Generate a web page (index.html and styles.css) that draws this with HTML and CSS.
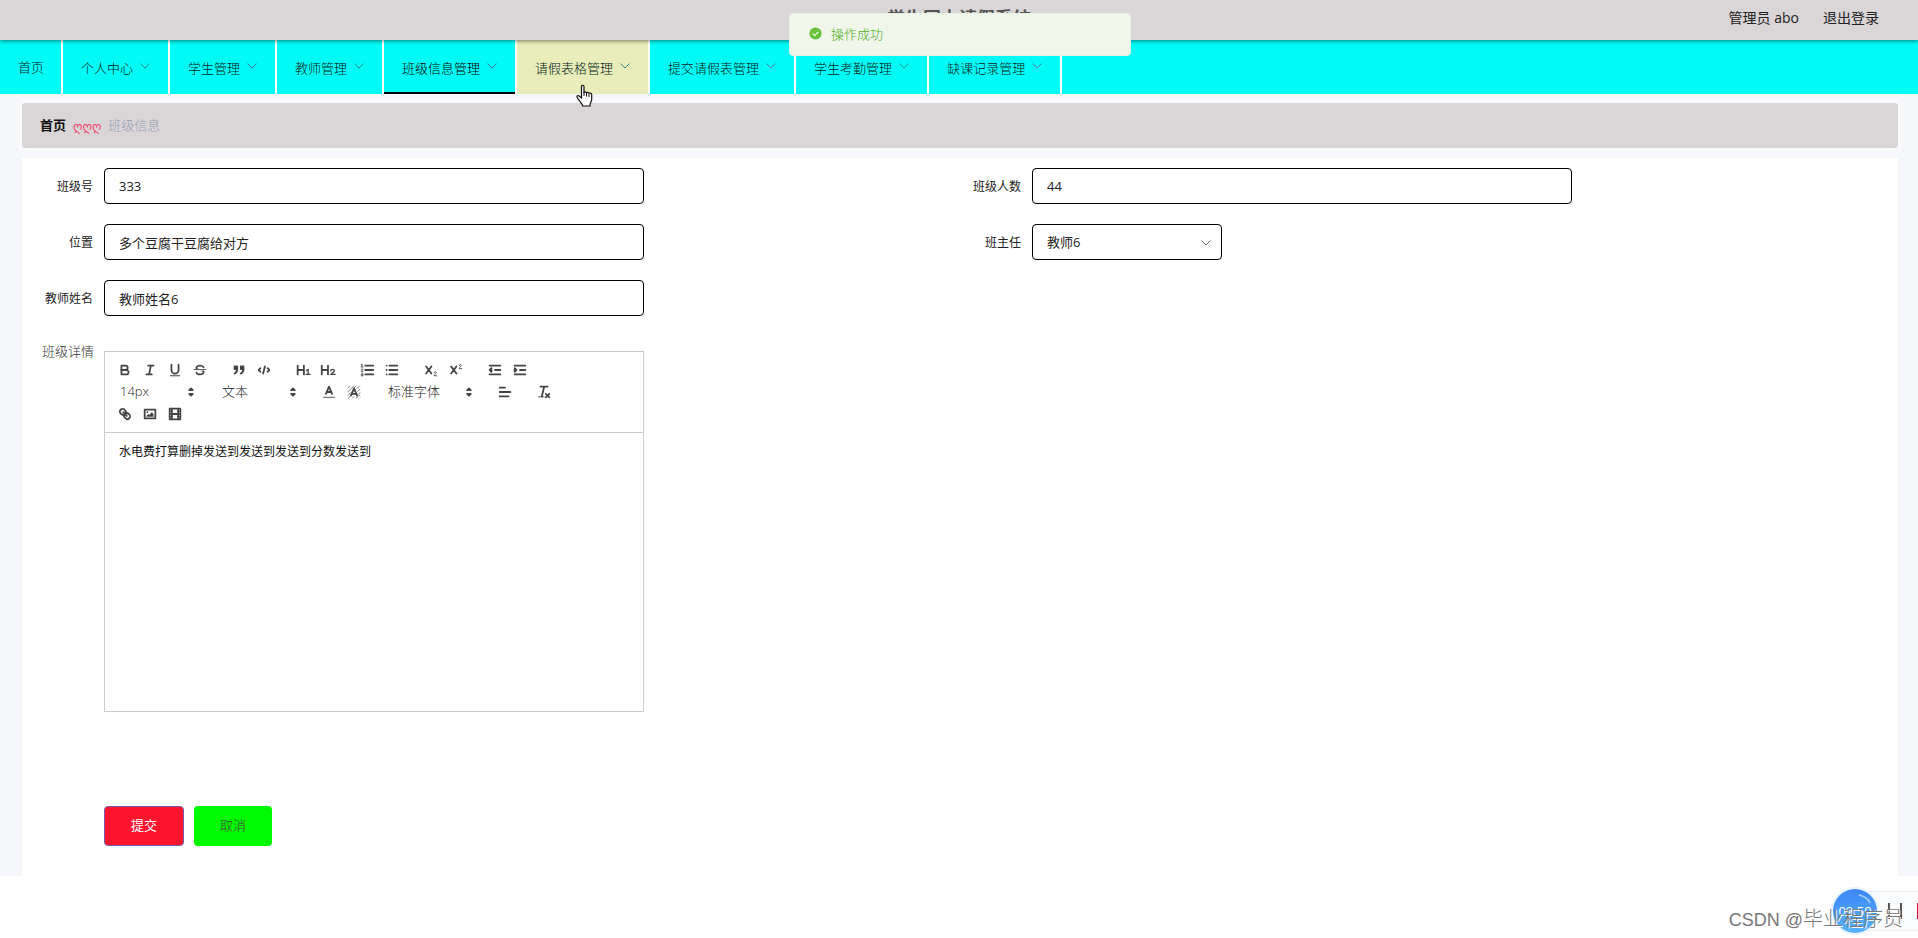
FILE: index.html
```html
<!DOCTYPE html>
<html lang="zh-CN">
<head>
<meta charset="utf-8">
<title>学生网上请假系统</title>
<link rel="stylesheet" href="styles.css">
</head>
<body>
<svg class="sprite" aria-hidden="true">
  <symbol id="chevron" viewBox="0 0 12 12"><path d="M1.5 3.5 6 8l4.500-4.500" fill="none" stroke="currentColor"/></symbol>
  <symbol id="updown" viewBox="0 0 18 18"><polygon points="7 11 9 13 11 11 7 11"/><polygon points="7 7 9 5 11 7 7 7"/></symbol>
</svg>

<header class="header">
  <h1 class="header-title">学生网上请假系统</h1>
  <div class="header-user">
    <span>管理员 abo</span>
    <a href="#logout">退出登录</a>
  </div>
</header>

<nav class="nav">
  <a class="nav-item nav-home" href="#home">首页</a>
  <a class="nav-item" href="#center">个人中心<svg class="nav-arrow"><use href="#chevron"/></svg></a>
  <a class="nav-item" href="#students">学生管理<svg class="nav-arrow"><use href="#chevron"/></svg></a>
  <a class="nav-item" href="#teachers">教师管理<svg class="nav-arrow"><use href="#chevron"/></svg></a>
  <a class="nav-item is-active" href="#classes">班级信息管理<svg class="nav-arrow"><use href="#chevron"/></svg></a>
  <a class="nav-item is-hover" href="#forms">请假表格管理<svg class="nav-arrow"><use href="#chevron"/></svg></a>
  <a class="nav-item" href="#submitted">提交请假表管理<svg class="nav-arrow"><use href="#chevron"/></svg></a>
  <a class="nav-item" href="#attendance">学生考勤管理<svg class="nav-arrow"><use href="#chevron"/></svg></a>
  <a class="nav-item" href="#absence">缺课记录管理<svg class="nav-arrow"><use href="#chevron"/></svg></a>
</nav>

<main class="main">
  <div class="breadcrumb">
    <a class="crumb-home" href="#home">首页</a>
    <span class="crumb-sep">ღღღ</span>
    <span class="crumb-current">班级信息</span>
  </div>

  <form class="panel">
    <div class="fields">
      <div class="field">
        <label class="label" for="class-no">班级号</label>
        <input class="input" id="class-no" type="text" value="333">
      </div>
      <div class="field">
        <label class="label" for="class-size">班级人数</label>
        <input class="input" id="class-size" type="text" value="44">
      </div>
      <div class="field">
        <label class="label" for="place">位置</label>
        <input class="input" id="place" type="text" value="多个豆腐干豆腐给对方">
      </div>
      <div class="field">
        <label class="label" for="head-teacher">班主任</label>
        <div class="select-box">
          <select class="input" id="head-teacher"><option>教师6</option></select>
          <svg class="select-arrow"><use href="#chevron"/></svg>
        </div>
      </div>
      <div class="field">
        <label class="label" for="teacher-name">教师姓名</label>
        <input class="input" id="teacher-name" type="text" value="教师姓名6">
      </div>
    </div>

    <div class="field detail">
      <label class="label label-detail" for="detail">班级详情</label>
      <div class="editor">
        <div class="toolbar">
          <div class="tool-row">
            <div class="tools">
              <button type="button" class="tool" aria-label="加粗"><svg viewBox="0 0 18 18"><path class="s" d="M5,4H9.500A2.500,2.500,0,0,1,12,6.500v0A2.500,2.500,0,0,1,9.500,9H5A0,0,0,0,1,5,9V4Z"/><path class="s" d="M5,9h5.500A2.500,2.500,0,0,1,13,11.500v0A2.500,2.500,0,0,1,10.500,14H5Z"/></svg></button>
              <button type="button" class="tool" aria-label="斜体"><svg viewBox="0 0 18 18"><path class="s" d="M7 4h6M5 14h6M8 14l2-10"/></svg></button>
              <button type="button" class="tool" aria-label="下划线"><svg viewBox="0 0 18 18"><path class="s" d="M5,3V9a4.012,4.012,0,0,0,4,4H9a4.012,4.012,0,0,0,4-4V3"/><rect class="f" height="1" rx=".5" width="12" x="3" y="15"/></svg></button>
              <button type="button" class="tool" aria-label="删除线"><svg viewBox="0 0 18 18"><path class="s thin" d="M15.500 8.500h-13"/><path class="f" d="M9.007,8C6.542,7.791,6,7.519,6,6.500,6,5.792,7.283,5,9,5c1.571,0,2.765.679,2.969,1.309a1,1,0,0,0,1.900-.617C13.356,4.106,11.354,3,9,3,6.200,3,4,4.538,4,6.500a3.200,3.200,0,0,0,.5,1.843Z"/><path class="f" d="M8.984,10C11.457,10.208,12,10.479,12,11.500c0,.708-1.283,1.500-3,1.500-1.571,0-2.765-.679-2.969-1.309a1,1,0,1,0-1.900.617C4.644,13.894,6.646,15,9,15c2.800,0,5-1.538,5-3.500a3.200,3.200,0,0,0-.5-1.843Z"/></svg></button>
            </div>
            <div class="tools">
              <button type="button" class="tool" aria-label="引用"><svg viewBox="0 0 18 18"><rect class="f s" height="3" width="3" x="4" y="5"/><rect class="f s" height="3" width="3" x="11" y="5"/><path class="f s" d="M7,8c0,4.031-3,5-3,5M14,8c0,4.031-3,5-3,5"/></svg></button>
              <button type="button" class="tool" aria-label="代码"><svg viewBox="0 0 18 18"><path class="s" d="M5 7 3 9l2 2M13 7l2 2-2 2M10 5 8 13"/></svg></button>
            </div>
            <div class="tools">
              <button type="button" class="tool" aria-label="标题 1"><svg viewBox="0 0 18 18"><path class="s" d="M3 4v10M10 4v10M3 9h7"/><path class="s mid" d="M13 9.500 14.800 8.500V14M12.500 14h4.500"/></svg></button>
              <button type="button" class="tool" aria-label="标题 2"><svg viewBox="0 0 18 18"><path class="s" d="M2 4v10M9 4v10M2 9h7"/><path class="s mid" d="M12 10c.3-1.200 1.200-1.700 2.200-1.600 1.300 0 2 .8 1.800 1.800-.2 1.100-2.600 2.200-3.900 3.700H17"/></svg></button>
            </div>
            <div class="tools">
              <button type="button" class="tool" aria-label="有序列表"><svg viewBox="0 0 18 18"><path class="s" d="M7 4h9M7 9h9M7 14h9"/><path class="s thin" d="M2.500 5.500h2M3.500 5.500v-3l-1 .5M4.500 10.500h-2c0-1 1.900-1.200 1.900-2.200 0-.9-1.600-.9-1.900-.1M2.500 14.500h1.800M2.500 12.700c.5-.5 1.900-.4 1.900.4 0 .7-.9.900-.9.900s1.100.1 1.100.9c0 1-1.600 1.100-2.200.5"/></svg></button>
              <button type="button" class="tool" aria-label="无序列表"><svg viewBox="0 0 18 18"><path class="s" d="M6 4h9M6 9h9M6 14h9M3 4v0M3 9v0M3 14v0"/></svg></button>
            </div>
            <div class="tools">
              <button type="button" class="tool" aria-label="下标"><svg viewBox="0 0 18 18"><path class="s" d="M3.500 5l6 8M9.500 5l-6 8"/><path class="s thin" d="M12.500 12c0-1.500 2.500-1.500 2.500 0 0 1-2.500 1.700-2.500 3.500H15.500"/></svg></button>
              <button type="button" class="tool" aria-label="上标"><svg viewBox="0 0 18 18"><path class="s" d="M3.500 5l6 8M9.500 5l-6 8"/><path class="s thin" d="M12.500 4c0-1.500 2.500-1.500 2.500 0 0 1-2.500 1.700-2.500 3.500H15.500"/></svg></button>
            </div>
            <div class="tools">
              <button type="button" class="tool" aria-label="减少缩进"><svg viewBox="0 0 18 18"><path class="s" d="M3 14h12M3 4h12M9 9h6"/><path class="f s" d="M5 7v4L3 9z"/></svg></button>
              <button type="button" class="tool" aria-label="增加缩进"><svg viewBox="0 0 18 18"><path class="s" d="M3 14h12M3 4h12M9 9h6"/><path class="f s" d="M3 7v4l2-2z"/></svg></button>
            </div>
          </div>
          <div class="tool-row">
            <div class="picker"><select aria-label="字号"><option>14px</option></select><svg><use href="#updown"/></svg></div>
            <div class="picker"><select aria-label="段落"><option>文本</option></select><svg><use href="#updown"/></svg></div>
            <div class="tools">
              <button type="button" class="tool" aria-label="文字颜色"><svg viewBox="0 0 18 18"><path class="s thin" d="M3 15h12"/><path class="s" d="M5.500 11 9 3l3.500 8M11.600 9H6.400"/></svg></button>
              <button type="button" class="tool" aria-label="背景颜色"><svg viewBox="0 0 18 18"><path class="hatch" d="M2 5 5 2M2 9 9 2M2 13 5.500 9.500M2 16.500 5 13.500M8 5.500 11.500 2M12 5.500 15.500 2M13 8.500 16 5.500M13.500 12 16 9.500M7 16l2-2M11 16l5-4M15 16l1-1"/><path class="s" d="M5.500 13 9 5l3.500 8M11.600 11H6.400"/></svg></button>
            </div>
            <div class="picker picker-font"><select aria-label="字体"><option>标准字体</option></select><svg><use href="#updown"/></svg></div>
            <div class="tools">
              <button type="button" class="tool" aria-label="对齐"><svg viewBox="0 0 18 18"><path class="s" d="M3 9h12M3 14h10M3 4h6"/></svg></button>
            </div>
            <div class="tools">
              <button type="button" class="tool" aria-label="清除格式"><svg viewBox="0 0 18 18"><path class="s" d="M5 3h8M6.500 14 9.200 3M11 11l4 4M15 11l-4 4"/><path class="s thin" d="M3 14.500h6"/></svg></button>
            </div>
          </div>
          <div class="tool-row">
            <div class="tools">
              <button type="button" class="tool" aria-label="链接"><svg viewBox="0 0 18 18"><path class="s" d="M7 7l4 4"/><path class="s" d="M8.900,4.577a3.476,3.476,0,0,1,.36,4.679A3.476,3.476,0,0,1,4.577,8.900C3.185,7.500,2.035,6.400,4.217,4.217S7.500,3.185,8.900,4.577Z"/><path class="s" d="M13.423,9.100a3.476,3.476,0,0,0-4.679-.36,3.476,3.476,0,0,0,.36,4.679c1.392,1.392,2.500,2.542,4.679.36S14.815,10.500,13.423,9.100Z"/></svg></button>
              <button type="button" class="tool" aria-label="图片"><svg viewBox="0 0 18 18"><rect class="s" height="10" width="12" x="3" y="4"/><circle class="f" cx="6" cy="7" r="1"/><path class="f" d="M5 12V11L7 9 8 10 11 7 13 9V12z"/></svg></button>
              <button type="button" class="tool" aria-label="视频"><svg viewBox="0 0 18 18"><rect class="s" height="12" width="12" x="3" y="3"/><path class="s" d="M5.500 3v12M12.500 3v12M5 9h8"/><path class="s thin" d="M3 6h3M3 9h3M3 12h3M12 6h3M12 9h3M12 12h3"/></svg></button>
            </div>
          </div>
        </div>
        <textarea class="editor-text" id="detail">水电费打算删掉发送到发送到发送到分数发送到</textarea>
      </div>
    </div>

    <div class="actions">
      <button type="submit" class="btn btn-submit">提交</button>
      <button type="button" class="btn btn-cancel">取消</button>
    </div>
  </form>
</main>

<div class="toast" role="status">
  <svg class="toast-icon" viewBox="0 0 14 14"><circle cx="7" cy="7" r="6.500" fill="#67c23a"/><path d="M4 7.200 6.200 9.300 10 5.300" fill="none" stroke="#f0f9eb" stroke-width="1.300"/></svg>
  操作成功
</div>

<svg class="cursor" viewBox="0 0 17 23" aria-hidden="true"><path d="M5.500 14V2.500C5.500.8 8 .8 8 2.500V9c0-1.500 2.500-1.500 2.500.3 0-1.500 2.500-1.200 2.500.5 0-1.200 2.700-1 2.700.7v5c0 2-1.700 3.500-1.700 5.500v1H6.500v-1C5.500 19 2.500 16 1.200 13.500c-.7-1.500.8-2.500 2-1.500z" fill="#fff" stroke="#111" stroke-width="1.200"/><path d="M8 8v4M10.500 9v3.500M13 10v3" stroke="#111" fill="none"/></svg>

<div class="recorder">
  <div class="recorder-bar"><i class="pause"></i><i class="stop"></i></div>
  <div class="recorder-time"><svg viewBox="0 0 44 44"><path d="M26 6c5 1 9 4 11 8" fill="none" stroke="#a9d2ff" stroke-width="1.500"/></svg>09:59</div>
</div>
<div class="watermark"><span class="watermark-site">CSDN @</span>毕业程序员</div>
</body>
</html>
```

FILE: styles.css
```css
* { box-sizing: border-box; }

body {
  margin: 0;
  background: #fff;
  color: #333;
  font: 300 13px/20px "Open Sans", "Noto Sans CJK SC", sans-serif;
  position: relative;
  min-height: 100vh;
  overflow-x: hidden;
}

a { color: inherit; text-decoration: none; }
button, input, select, textarea { font: inherit; color: inherit; }
.sprite { display: none; }

/* Header */
.header {
  position: relative;
  z-index: 1;
  display: flex;
  justify-content: center;
  height: 40px;
  background: #dad5d6;
  box-shadow: 0 1px 4px rgba(0, 0, 0, .5);
}
.header-title {
  margin: 0;
  font-size: 18px;
  line-height: 36px;
  font-weight: 700;
  color: #555;
}
.header-user {
  position: absolute;
  right: 39px;
  top: 0;
  display: flex;
  gap: 24px;
  font-size: 14px;
  line-height: 36px;
  font-weight: 400;
  color: #222;
}

/* Navigation */
.nav {
  display: flex;
  height: 54px;
  background: #00fbf6;
  color: #001c20;
}
.nav-item {
  display: flex;
  align-items: center;
  padding: 2px 17px 0 18px;
  border-right: 2px solid #fff;
}
.nav-home { padding-top: 0; }
.nav-arrow {
  width: 12px;
  height: 12px;
  margin: 0 0 4px 6px;
  color: #2f8f98;
}
.is-active { box-shadow: inset 0 -2px #000; color: #000; }
.is-hover { background: #e9edb9; }

/* Page body */
.main {
  padding: 9px 20px 0 22px;
  background: #f6f7fa;
}
.breadcrumb {
  display: flex;
  align-items: center;
  gap: 7px;
  height: 45px;
  padding: 0 18px 2px;
  border-radius: 3px;
  background: #dad5d6;
  box-shadow: 0 0 6px 3px #fcfcfd;
}
.crumb-home { font-weight: 700; color: #111; }
.crumb-sep { color: #f04470; font: 12px/16px "DejaVu Sans", sans-serif; padding-top: 4px; }
.crumb-current { color: #97a0b8; }

.panel {
  margin-top: 10px;
  padding: 10px 10px 30px;
  background: #fff;
}
.fields {
  display: grid;
  grid-template-columns: 1fr 1fr;
  row-gap: 20px;
}
.field { display: flex; }
.label {
  width: 72px;
  padding-right: 11px;
  text-align: right;
  font-size: 12px;
  font-weight: 400;
  line-height: 38px;
  height: 36px;
  color: #222;
}
.input {
  width: 540px;
  height: 36px;
  padding: 0 14px;
  border: 1px solid #000;
  border-radius: 4px;
  background: #fff;
  color: #222;
  font-size: 13px;
  font-weight: 400;
  appearance: none;
}
.select-box { position: relative; width: 190px; }
.select-box .input { width: 100%; }
.select-arrow {
  position: absolute;
  right: 10px;
  top: 13px;
  width: 12px;
  height: 12px;
  color: #666;
  pointer-events: none;
}

/* Rich text editor */
.detail { margin-top: 35px; }
.label-detail {
  margin-top: -10px;
  padding-right: 10px;
  font-size: 13px;
  font-weight: 300;
  line-height: 20px;
  color: #333;
}
.editor {
  width: 540px;
  border: 1px solid #ccc;
}
.toolbar {
  padding: 7px;
  border-bottom: 1px solid #ccc;
}
.tool-row { display: flex; gap: 14px; height: 22px; align-items: center; }
.tools { display: flex; }
.tool {
  display: flex;
  align-items: center;
  justify-content: center;
  width: 25px;
  height: 22px;
  padding: 0;
  border: 0;
  background: none;
}
.tool svg { width: 16px; height: 16px; }
.s { fill: none; stroke: #444; stroke-width: 2; stroke-linecap: round; stroke-linejoin: round; }
.f.s { fill: #444; }
.thin { stroke-width: 1; }
.mid { stroke-width: 1.500; }
.f { fill: #444; }
.hatch { fill: none; stroke: #777; stroke-width: 1; }
.picker { position: relative; width: 88px; }
.picker-font { width: 98px; }
.picker select {
  display: block;
  width: 100%;
  height: 22px;
  padding: 0 8px 2px;
  border: 0;
  background: none;
  appearance: none;
  color: #222;
}
.picker svg {
  position: absolute;
  right: 1px;
  top: 3px;
  width: 16px;
  height: 16px;
  fill: #444;
  stroke: #444;
  stroke-width: 2;
  stroke-linejoin: round;
  pointer-events: none;
}
.editor-text {
  display: block;
  width: 100%;
  height: 278px;
  padding: 9px 14px;
  border: 0;
  outline: 0;
  resize: none;
  background: none;
  font-size: 12px;
  font-weight: 400;
  color: #111;
}

.actions {
  display: flex;
  gap: 10px;
  margin: 94px 0 0 72px;
}
.btn {
  width: 80px;
  height: 40px;
  padding: 0 0 2px;
  border: 0;
  border-radius: 4px;
}
.btn-submit { background: #ff142d; color: #fff; border: 1px solid #7060a8; font-weight: 400; }
.btn-cancel { width: 78px; background: #00fa00; color: #444; }

/* Overlays */
.toast {
  position: absolute;
  z-index: 2;
  top: 13px;
  left: 50%;
  display: flex;
  align-items: center;
  gap: 9px;
  width: 342px;
  height: 43px;
  margin-left: -170px;
  padding: 0 19px 2px;
  border: 1px solid #e6f3de;
  border-radius: 4px;
  background: #f0f7ea;
  color: #4fae22;
}
.toast-icon { width: 13px; height: 13px; }
.cursor {
  position: absolute;
  z-index: 2;
  left: 576px;
  top: 84px;
  width: 17px;
  height: 23px;
}
.recorder {
  position: absolute;
  right: 0;
  bottom: 5px;
  width: 85px;
  height: 44px;
}
.recorder-bar {
  position: absolute;
  inset: 2px 0 2px 22px;
  display: flex;
  align-items: center;
  justify-content: flex-end;
  gap: 15px;
  border: 1px solid #edf0f3;
  border-right: 0;
  background: #f9fbfd;
}
.pause { width: 14px; height: 16px; border: solid #555; border-width: 0 2px; }
.stop { width: 1px; height: 16px; background: #c01040; }
.recorder-time {
  position: absolute;
  left: 0;
  top: 0;
  width: 44px;
  height: 44px;
  border-radius: 50%;
  background: linear-gradient(#3c86f6, #58b4fc);
  box-shadow: 0 0 0 2px #e8f4ff;
  color: #fff;
  font-weight: 400;
  line-height: 44px;
  text-align: center;
}
.recorder-time svg { position: absolute; inset: 0; }
.watermark {
  position: absolute;
  right: 15px;
  bottom: 3px;
  font-size: 20px;
  line-height: 30px;
  color: #777;
  text-shadow: 1px 1px #fff;
}
.watermark-site { font-family: "Liberation Sans", sans-serif; font-size: 18px; }
```
